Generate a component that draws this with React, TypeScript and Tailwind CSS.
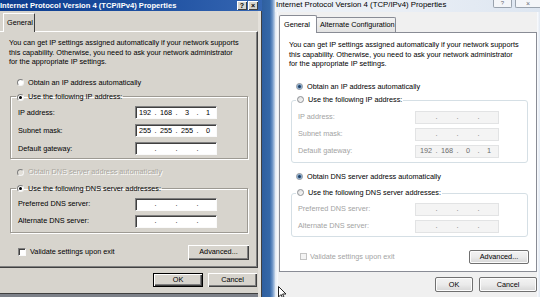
import React from 'react';

type Seg = [string, string, string, string];
const EMPTY: Seg = ['', '', '', ''];

function ClassicRadio({ checked, disabled }: { checked?: boolean; disabled?: boolean }) {
  return (
    <span
      className={`w-[7px] h-[7px] shrink-0 rounded-full border border-t-[#7f7f7f] border-l-[#7f7f7f] border-r-[#f4f4f4] border-b-[#f4f4f4] flex items-center justify-center ${
        disabled ? 'bg-[#e2dfd8]' : 'bg-white'
      }`}
    >
      {checked && <span className="w-[3px] h-[3px] rounded-full bg-black" />}
    </span>
  );
}

function AeroRadio({ checked }: { checked?: boolean }) {
  return (
    <span className="w-[7px] h-[7px] shrink-0 rounded-full border border-[#8c8f94] bg-gradient-to-br from-[#dcdcdc] to-[#fbfbfb] flex items-center justify-center">
      {checked && <span className="w-[3px] h-[3px] rounded-full bg-[#1f3e63] shadow-[0_0_0_1px_#7fa3c8]" />}
    </span>
  );
}

function ClassicIp({ v = EMPTY }: { v?: Seg }) {
  return (
    <div className="w-[82px] h-[13px] flex items-center pl-[1px] bg-white border border-t-[#7f7f7f] border-l-[#7f7f7f] border-r-[#fafafa] border-b-[#fafafa] shadow-[inset_1px_1px_0_#404040]">
      {v.map((s, i) => (
        <React.Fragment key={i}>
          <span className="w-[16px] text-center">{s}</span>
          {i < 3 && <span className="w-[5px] text-center">.</span>}
        </React.Fragment>
      ))}
    </div>
  );
}

function AeroIp({ v = EMPTY }: { v?: Seg }) {
  return (
    <div className="w-[84px] h-[13px] flex items-center pl-[2px] bg-[#f4f4f4] border border-[#e2e3e4] text-[#6d6d6d]">
      {v.map((s, i) => (
        <React.Fragment key={i}>
          <span className="w-[16px] text-center">{s}</span>
          {i < 3 && <span className="w-[5px] text-center">.</span>}
        </React.Fragment>
      ))}
    </div>
  );
}

function ClassicButton({ label, w, primary }: { label: string; w: string; primary?: boolean }) {
  return (
    <div
      className={`${w} h-full flex items-center justify-center bg-[#d7d4cd] ${
        primary
          ? 'border border-black shadow-[inset_1px_1px_0_#fff,inset_-1px_-1px_0_#404040,inset_-2px_-2px_0_#808080]'
          : 'shadow-[inset_1px_1px_0_#fff,inset_-1px_-1px_0_#404040,inset_-2px_-2px_0_#808080]'
      }`}
    >
      {label}
    </div>
  );
}

function AeroButton({ label, w }: { label: string; w: string }) {
  return (
    <div
      className={`${w} h-full flex items-center justify-center rounded-[2px] border border-[#707070] bg-gradient-to-b from-[#f3f3f3] via-[#ebebeb] to-[#d6d6d6] shadow-[inset_0_0_0_1px_#fcfcfc]`}
    >
      {label}
    </div>
  );
}

const PARA = [
  'You can get IP settings assigned automatically if your network supports',
  'this capability. Otherwise, you need to ask your network administrator',
  'for the appropriate IP settings.',
];

function ClassicWindow() {
  return (
    <div className="w-[262px] h-full flex flex-col shrink-0">
      {/* title bar */}
      <div className="h-[11px] flex items-center bg-gradient-to-r from-[#0c3c8e] via-[#1b4d9e] to-[#3566b2]">
        <span className="flex-1 text-white font-bold text-[7.6px] leading-[11px] whitespace-nowrap">
          Internet Protocol Version 4 (TCP/IPv4) Properties
        </span>
        <div className="flex gap-[1px] mr-[4px] h-[9px]">
          <div className="w-[10px] h-full bg-[#d7d4cd] shadow-[inset_1px_1px_0_#fff,inset_-1px_-1px_0_#404040] flex items-center justify-center font-bold text-[7px] leading-[9px]">
            ?
          </div>
          <div className="w-[10px] h-full bg-[#d7d4cd] shadow-[inset_1px_1px_0_#fff,inset_-1px_-1px_0_#404040] flex items-center justify-center font-bold text-[7px] leading-[9px]">
            ×
          </div>
        </div>
      </div>

      <div className="flex-1 flex">
        {/* client */}
        <div className="w-[258px] flex flex-col bg-[#d7d4cd]">
          <div className="h-[20px] flex items-end pl-[3px] pt-[1px]">
            <div className="w-[32px] h-[19px] -mb-[1px] relative bg-[#d7d4cd] border-t border-l border-t-white border-l-white border-r border-r-[#404040] rounded-t-[1px] flex items-center pl-[3px]">
              General
            </div>
          </div>

          <div className="w-[258px] h-[237px] border-t border-t-white border-r border-r-[#404040] border-b border-b-[#404040] shadow-[inset_-1px_-1px_0_#808080] flex flex-col">
            <div className="pt-[6px] pl-[9px]">
              {PARA.map((l) => (
                <div key={l} className="whitespace-nowrap">{l}</div>
              ))}
            </div>

            <div className="mt-[11px] pl-[17px] h-[10px] flex items-center gap-[4px]">
              <ClassicRadio />
              <span>Obtain an IP address automatically</span>
            </div>

            <fieldset className="mt-[4px] ml-[10px] w-[238px] border border-[#9d9a93] shadow-[inset_1px_1px_0_#fff,1px_1px_0_#fff] pb-[3px]">
              <legend className="ml-[5px] px-[1px]">
                <span className="inline-flex items-center gap-[4px] h-[10px]">
                  <ClassicRadio checked />
                  <span>Use the following IP address:</span>
                </span>
              </legend>
              <div className="mt-[4px] pl-[7px] flex flex-col gap-[5px]">
                <div className="flex items-center">
                  <span className="w-[117px]">IP address:</span>
                  <ClassicIp v={['192', '168', '3', '1']} />
                </div>
                <div className="flex items-center">
                  <span className="w-[117px]">Subnet mask:</span>
                  <ClassicIp v={['255', '255', '255', '0']} />
                </div>
                <div className="flex items-center">
                  <span className="w-[117px]">Default gateway:</span>
                  <ClassicIp />
                </div>
              </div>
            </fieldset>

            <div className="mt-[8px] pl-[17px] h-[10px] flex items-center gap-[4px] text-[#a9a69e] [text-shadow:1px_1px_0_#fff]">
              <ClassicRadio disabled />
              <span>Obtain DNS server address automatically</span>
            </div>

            <fieldset className="mt-[6px] ml-[10px] w-[238px] border border-[#9d9a93] shadow-[inset_1px_1px_0_#fff,1px_1px_0_#fff] pb-[4px]">
              <legend className="ml-[5px] px-[1px]">
                <span className="inline-flex items-center gap-[4px] h-[10px]">
                  <ClassicRadio checked />
                  <span>Use the following DNS server addresses:</span>
                </span>
              </legend>
              <div className="mt-[4px] pl-[7px] flex flex-col gap-[4px]">
                <div className="flex items-center">
                  <span className="w-[117px]">Preferred DNS server:</span>
                  <ClassicIp />
                </div>
                <div className="flex items-center">
                  <span className="w-[117px]">Alternate DNS server:</span>
                  <ClassicIp />
                </div>
              </div>
            </fieldset>

            <div className="mt-[12px] pl-[18px] pr-[8px] h-[15px] flex items-center justify-between">
              <div className="flex items-center gap-[4px]">
                <span className="w-[8px] h-[8px] bg-white border border-t-[#7f7f7f] border-l-[#7f7f7f] border-r-[#fafafa] border-b-[#fafafa] shadow-[inset_1px_1px_0_#404040]" />
                <span>Validate settings upon exit</span>
              </div>
              <ClassicButton label="Advanced..." w="w-[61px]" />
            </div>
          </div>

          <div className="mt-[5px] h-[14px] flex justify-end gap-[5px] pr-[1px]">
            <ClassicButton label="OK" w="w-[50px]" primary />
            <ClassicButton label="Cancel" w="w-[49px]" />
          </div>
          <div className="flex-1" />
          <div className="h-[4px] border-t border-t-[#404040] bg-[#7d8189]" />
        </div>
        {/* right frame */}
        <div className="w-[4px] bg-[linear-gradient(to_right,#e4e1db_0_75%,#404040_75%)]" />
      </div>
    </div>
  );
}

function AeroWindow() {
  return (
    <div className="flex-1 h-full flex flex-col bg-[#e6ecf3]">
      {/* title bar */}
      <div className="h-[12px] flex items-start bg-gradient-to-r from-[#eef2f7] via-[#e9eef5] to-[#dde6f1]">
        <span className="ml-[1px] flex-1 text-[7.8px] leading-[10px] whitespace-nowrap text-black">
          Internet Protocol Version 4 (TCP/IPv4) Properties
        </span>
        <div className="flex gap-[3px] h-[8px]">
          <div className="w-[19px] h-full border border-t-0 border-[#9aa3ae] rounded-b-[2px] bg-[#f4f6f9] flex items-center justify-center text-[6px] leading-[7px] text-[#6a6f76]">
            ?
          </div>
          <div className="w-[25px] h-full border border-t-0 border-r-0 border-[#9aa3ae] rounded-bl-[2px] bg-[#f4f6f9] flex items-center justify-center text-[7px] leading-[7px] text-[#6a6f76]">
            ×
          </div>
        </div>
      </div>

      <div className="flex-1 flex">
        <div className="w-[3px] bg-[linear-gradient(to_right,#dfe7f1,#fbfcfe)]" />
        <div className="w-[259px] flex flex-col bg-[#f0f0f0]">
          <div className="pt-[3px] h-[20px] flex items-end pl-[1px]">
            <div className="w-[38px] h-[18px] -mb-[1px] relative bg-white border border-b-0 border-[#898c95] rounded-t-[2px] flex items-center pl-[4px]">
              General
            </div>
            <div className="w-[79px] h-[15px] bg-gradient-to-b from-[#f2f2f2] to-[#e3e3e3] border border-l-0 border-b-0 border-[#898c95] rounded-tr-[2px] flex items-center pl-[3px] whitespace-nowrap">
              Alternate Configuration
            </div>
          </div>

          <div className="ml-[1px] w-[258px] h-[240px] bg-white border border-[#898c95] flex flex-col">
            <div className="pt-[7px] pl-[9px]">
              {PARA.map((l) => (
                <div key={l} className="whitespace-nowrap">{l}</div>
              ))}
            </div>

            <div className="mt-[13px] pl-[16px] h-[10px] flex items-center gap-[4px]">
              <AeroRadio checked />
              <span>Obtain an IP address automatically</span>
            </div>

            <fieldset className="mt-[3px] ml-[11px] w-[237px] border border-[#d5dfe5] rounded-[3px] pb-[4px]">
              <legend className="ml-[4px] px-[1px]">
                <span className="inline-flex items-center gap-[4px] h-[10px]">
                  <AeroRadio />
                  <span>Use the following IP address:</span>
                </span>
              </legend>
              <div className="mt-[5px] pl-[6px] flex flex-col gap-[4px] text-[#a3a3a3]">
                <div className="flex items-center">
                  <span className="w-[117px]">IP address:</span>
                  <AeroIp />
                </div>
                <div className="flex items-center">
                  <span className="w-[117px]">Subnet mask:</span>
                  <AeroIp />
                </div>
                <div className="flex items-center">
                  <span className="w-[117px]">Default gateway:</span>
                  <AeroIp v={['192', '168', '0', '1']} />
                </div>
              </div>
            </fieldset>

            <div className="mt-[9px] pl-[16px] h-[10px] flex items-center gap-[4px]">
              <AeroRadio checked />
              <span>Obtain DNS server address automatically</span>
            </div>

            <fieldset className="mt-[6px] ml-[11px] w-[237px] border border-[#d5dfe5] rounded-[3px] pb-[3px]">
              <legend className="ml-[4px] px-[1px]">
                <span className="inline-flex items-center gap-[4px] h-[10px]">
                  <AeroRadio />
                  <span>Use the following DNS server addresses:</span>
                </span>
              </legend>
              <div className="mt-[4px] pl-[6px] flex flex-col gap-[4px] text-[#a3a3a3]">
                <div className="flex items-center">
                  <span className="w-[117px]">Preferred DNS server:</span>
                  <AeroIp />
                </div>
                <div className="flex items-center">
                  <span className="w-[117px]">Alternate DNS server:</span>
                  <AeroIp />
                </div>
              </div>
            </fieldset>

            <div className="mt-[13px] pl-[20px] pr-[7px] h-[14px] flex items-center justify-between">
              <div className="flex items-center gap-[3px] text-[#a3a3a3]">
                <span className="w-[7px] h-[7px] border border-[#c4c4c4] bg-[#f4f4f4]" />
                <span>Validate settings upon exit</span>
              </div>
              <AeroButton label="Advanced..." w="w-[60px]" />
            </div>
          </div>

          <div className="mt-[5px] h-[15px] flex justify-end gap-[6px]">
            <AeroButton label="OK" w="w-[38px]" />
            <AeroButton label="Cancel" w="w-[58px]" />
          </div>
        </div>
        <div className="flex-1 bg-[linear-gradient(to_right,#fbfcfe,#dfe7f1)]" />
      </div>
    </div>
  );
}

export default function App() {
  return (
    <div className="relative w-[540px] h-[297px] flex overflow-hidden font-['Liberation_Sans',Arial,sans-serif] text-[7.3px] leading-[9.5px] text-black">
      <ClassicWindow />
      {/* desktop strip between windows */}
      <div className="w-[13px] h-full shrink-0 bg-[linear-gradient(to_right,#2f5f9f_0%,#3568a8_60%,#6a92c5_80%,#c6d6ea_100%)]" />
      <AeroWindow />
      {/* mouse pointer */}
      <svg className="absolute left-[278px] top-[286px]" width="9" height="14" viewBox="0 0 9 14">
        <path d="M0.5 0.5 L0.5 11 L3 8.5 L5 13 L6.5 12.3 L4.6 8 L8 8 Z" fill="#fff" stroke="#222" strokeWidth="1" />
      </svg>
    </div>
  );
}
